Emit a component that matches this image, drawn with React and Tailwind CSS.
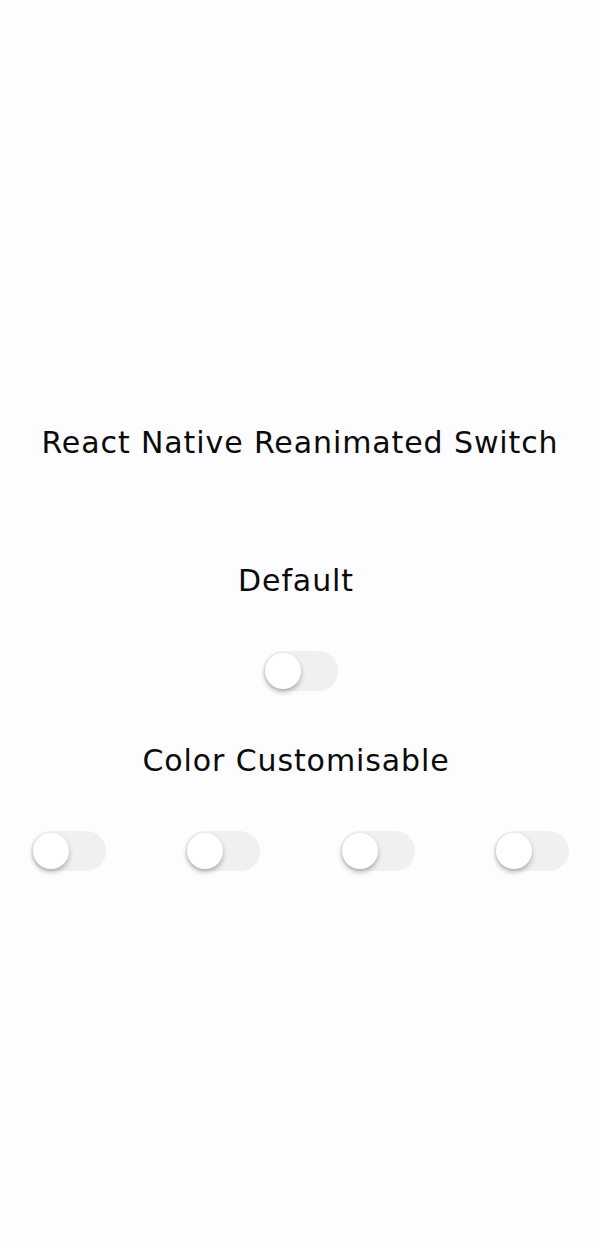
import React from "react";

function Toggle() {
  return (
    <div className="w-[75px] h-[40px] rounded-full bg-[#eff0f2] p-[2px] flex items-center">
      <div className="w-[36px] h-[36px] rounded-full bg-white shadow-[0_3px_5px_rgba(0,0,0,0.28)]" />
    </div>
  );
}

export default function App() {
  return (
    <div
      className="w-[600px] h-[1248px] bg-[#fdfcfe] flex flex-col items-center pt-[425px] text-[#0a0a0a]"
      style={{ fontFamily: "'DejaVu Sans', 'Open Sans', sans-serif" }}
    >
      <div className="text-[30px] leading-[36px] tracking-[0.9px]">React Native Reanimated Switch</div>
      <div className="text-[30px] leading-[36px] tracking-[0.9px] mt-[102px] pr-[8px]">Default</div>
      <div className="mt-[52px]">
        <Toggle />
      </div>
      <div className="text-[30px] leading-[36px] tracking-[0.9px] mt-[52px] pr-[8px]">Color Customisable</div>
      <div className="mt-[52px] w-full px-[31px] flex justify-between">
        <Toggle />
        <Toggle />
        <Toggle />
        <Toggle />
      </div>
    </div>
  );
}
